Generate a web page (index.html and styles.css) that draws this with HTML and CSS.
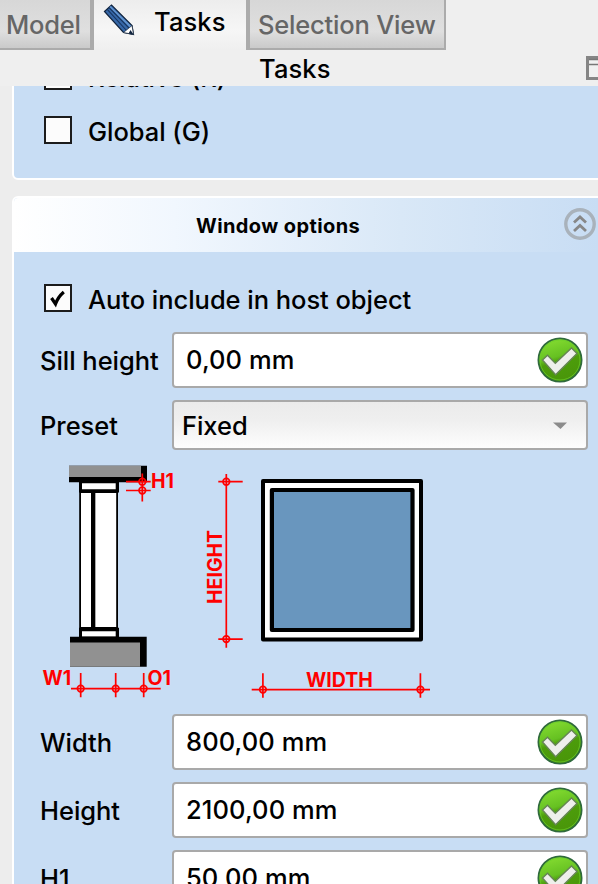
FILE: index.html
```html
<!DOCTYPE html>
<html lang="en">
<head>
<meta charset="utf-8">
<title>Tasks</title>
<link rel="stylesheet" href="styles.css">
</head>
<body>
<svg width="0" height="0" class="defs">
  <defs>
    <linearGradient id="green" x1="0" y1="0" x2=".3" y2="1">
      <stop offset="0" stop-color="#8be234"/><stop offset=".5" stop-color="#66c122"/><stop offset=".62" stop-color="#4c9d0b"/><stop offset="1" stop-color="#4a960a"/>
    </linearGradient>
    <symbol id="ok" viewBox="0 0 48 48">
      <circle cx="24" cy="24" r="21.6" fill="url(#green)" stroke="#2f6a3c" stroke-width="1.8"/>
      <circle cx="24" cy="24" r="20" fill="none" stroke="#6bd02a" stroke-width="1" opacity=".7"/>
      <path d="M6.5 24 11.5 19.3 19.3 27.3 35.5 12 41 17.5 19.6 38.8Z" fill="#eeefec" stroke="#658554" stroke-width="1.4"/>
    </symbol>
  </defs>
</svg>
<nav class="tabs">
  <div class="tab tab-model"><span>Model</span></div>
  <div class="tab tab-tasks">
    <svg class="pencil" width="32" height="32" viewBox="0 0 32 32">
      <path d="M1.5 7.5 8.5 1 29 21.500 30.500 30.500 20.500 28.500Z" fill="#3768a8" stroke="#10233d" stroke-width="1.2"/>
      <path d="M6.800 2.700 27.500 22.800" stroke="#5f92cf" stroke-width="2.200"/>
      <path d="M4 5.200 23.500 26.500M6 3.500 26 24" stroke="#16345f" stroke-width="1.100"/>
      <path d="M20.500 28.500 29 21.500 30.500 30.500Z" fill="#fff" stroke="#18283c" stroke-width=".7"/>
      <path d="M27.500 26 30.700 30.700 25.500 29.600Z" fill="#10233d"/>
    </svg>
    <span>Tasks</span>
  </div>
  <div class="tab tab-selection"><span>Selection View</span></div>
</nav>
<header class="dock-title">
  <span>Tasks</span>
  <svg class="float-icon" width="24" height="24" viewBox="0 0 24 24">
    <path d="M1.500 1.500H22.500V22.500H1.500Z" fill="#f0f0f0" stroke="#858585" stroke-width="3"/>
    <path d="M3 8.500H24M3 3.500H24" stroke="#777" stroke-width="1.600"/>
  </svg>
</header>
<main class="scroll">
  <section class="panel panel-top">
    <label class="check-row"><i class="box"></i><span>Relative (R)</span></label>
    <label class="check-row"><i class="box"></i><span>Global (G)</span></label>
  </section>
  <section class="panel">
    <div class="panel-head">
      <h2>Window options</h2>
      <svg class="collapse" width="32" height="32" viewBox="0 0 32 32" fill="none">
        <circle cx="16" cy="16" r="14.200" stroke="#a9b2bb" stroke-width="3.400"/>
        <path d="M10 14.500 16 9 22 14.500M10 23 16 17.500 22 23" stroke="#878787" stroke-width="2.800"/>
      </svg>
    </div>
    <div class="form">
      <label class="check-row wide"><i class="box"><svg width="24" height="24" viewBox="0 0 24 24"><path d="M5.500 12 9.500 18Q12 11 17.800 6" fill="none" stroke="#000" stroke-width="3.200"/></svg></i><span>Auto include in host object</span></label>
      <span class="label">Sill height</span>
      <div class="field"><span>0,00 mm</span><svg class="ok"><use href="#ok"/></svg></div>
      <span class="label">Preset</span>
      <div class="select"><span>Fixed</span><svg width="14" height="8" viewBox="0 0 14 8"><path d="M0 .5H14L7.500 7Z" fill="#8b8b8b"/></svg></div>
      <svg class="diagram wide" width="548" height="240" viewBox="40 462 548 240">
        <g class="section">
          <path d="M69 465.700H147V482.300H69Z" fill="#000"/>
          <path d="M69 465.700H141V477H69Z" fill="#919191"/>
          <path d="M79 482H119V492.500H79Z" fill="#000"/>
          <path d="M82 483.300H115.700V489.200H82Z" fill="#fff"/>
          <path d="M79.200 492H118V628H79.200Z" fill="#000"/>
          <path d="M81 493H116.200V627H81Z" fill="#fff"/>
          <path d="M91 493H95V627H91Z" fill="#000"/>
          <path d="M95 493H96V627H95Z" fill="#aaa"/>
          <path d="M79 627.700H119V637H79Z" fill="#000"/>
          <path d="M82 631.300H115.700V636.500H82Z" fill="#fff"/>
          <path d="M70 636.700H146.700V666.700H70Z" fill="#000"/>
          <path d="M70 642.500H140V666.700H70Z" fill="#919191"/>
        </g>
        <rect x="263" y="481" width="158" height="158.600" fill="#fff" stroke="#000" stroke-width="4" stroke-linejoin="round"/>
        <rect x="271.900" y="490" width="140.600" height="140" fill="#6996be" stroke="#000" stroke-width="4.200" stroke-linejoin="round"/>
        <g stroke="#f00" stroke-width="1.700" fill="none">
          <path d="M142.300 473.500V501.500M126 481.700H150.700M126 490.500H150.700"/>
          <path d="M71 688.600H160.700M80.700 673V697.300M115.700 673V697.300M143.700 673V697.300"/>
          <path d="M226.300 474V647.700M218.300 481.700H242.700M218.300 639.100H242.700"/>
          <path d="M251.700 689.600H430M262.900 673.300V697.700M420.400 673.300V697.700"/>
          <circle cx="142.300" cy="481.700" r="3.300"/><circle cx="142.300" cy="490.500" r="3.300"/>
          <circle cx="80.700" cy="688.600" r="3.300"/><circle cx="115.700" cy="688.600" r="3.300"/><circle cx="143.700" cy="688.600" r="3.300"/>
          <circle cx="226.300" cy="481.700" r="3.300"/><circle cx="226.300" cy="639.100" r="3.300"/>
          <circle cx="262.900" cy="689.600" r="3.300"/><circle cx="420.400" cy="689.600" r="3.300"/>
        </g>
        <g class="dims">
          <text x="151" y="487.500">H1</text>
          <text x="42.500" y="685">W1</text>
          <text x="147.500" y="685">O1</text>
          <text x="306" y="686.500">WIDTH</text>
          <text transform="translate(221.500 604) rotate(-90)">HEIGHT</text>
        </g>
      </svg>
      <span class="label">Width</span>
      <div class="field"><span>800,00 mm</span><svg class="ok"><use href="#ok"/></svg></div>
      <span class="label">Height</span>
      <div class="field"><span>2100,00 mm</span><svg class="ok"><use href="#ok"/></svg></div>
      <span class="label">H1</span>
      <div class="field"><span>50,00 mm</span><svg class="ok"><use href="#ok"/></svg></div>
    </div>
  </section>
</main>
</body>
</html>
```
FILE: styles.css
```css
* { box-sizing: border-box; }
html, body { margin: 0; height: 884px; overflow: hidden; }
body {
  width: 598px;
  display: flex;
  flex-direction: column;
  background: #efefef;
  color: #000;
  font: 500 25.5px/32px Inter, "Liberation Sans", sans-serif;
  letter-spacing: -0.04px;
  white-space: nowrap;
}
.defs { position: absolute; }
svg { display: block; flex: none; }

.tabs { display: flex; height: 50px; flex: none; }
.tab { display: flex; height: 50px; padding-top: 9px; }
.tab-model, .tab-selection {
  color: #666;
  background: linear-gradient(#d7d7d7, #dfdfdf 65%, #cacaca);
  border-bottom: 2px solid #ababab;
}
.tab-model { width: 94px; padding-left: 6px; border-right: 4px solid #ababab; letter-spacing: -0.2px; }
.tab-tasks { width: 152px; padding: 6px 0 0 9px; gap: 19px; background: linear-gradient(#ededed, #f6f6f6 60%, #efefef); letter-spacing: 0.1px; }
.tab-selection { width: 200px; padding-left: 8px; border-left: 4px solid #ababab; border-right: 2px solid #ababab; letter-spacing: -0.2px; }
.pencil { margin-top: -2px; }

.dock-title { display: flex; justify-content: space-between; height: 36px; flex: none; padding: 3px 0 0 259px; overflow: hidden; letter-spacing: 0.1px; }
.float-icon { margin: 3px -12px 0 0; }

.scroll { display: flex; flex-direction: column; gap: 16px; flex: 1; min-height: 0; overflow: hidden; padding-left: 12px; background: #ededed; }
.panel { width: 600px; flex: none; border: 2px solid #fff; border-radius: 6px; background: #c8ddf4; overflow: hidden; }
.panel-top { display: flex; flex-direction: column; gap: 14px; height: 140px; margin-top: -46px; padding: 14px 0 0 30px; }
.panel-head { display: flex; align-items: center; height: 54px; background: linear-gradient(90deg, #fff, #f1f7fe 27%, #d9e8f7 65%, #c8ddf4 98%); }
.panel-head h2 { margin: 2px 0 0 182px; width: 168px; font-size: 20px; font-weight: 700; letter-spacing: 0.4px; }
.collapse { margin: -2px 0 0 200px; }

.check-row { display: flex; align-items: center; height: 40px; gap: 16px; }
.check-row span { padding-top: 3px; }
.box { flex: none; width: 28px; height: 28px; border: 2px solid #1c1c1c; background: #fcfcfc; }
.form { display: grid; grid-template-columns: 132px 416px; row-gap: 12px; padding: 26px 0 0 26px; }
.form .check-row { padding-left: 4px; margin-bottom: 2px; }
.wide { grid-column: 1 / -1; }
.label { align-self: center; padding-top: 1px; }
.field, .select { display: flex; align-items: center; justify-content: space-between; border: 2px solid #a9a9a9; border-radius: 4px; }
.field { height: 56px; padding: 0 2px 0 12px; background: #fff; letter-spacing: 0.1px; }
.select { height: 50px; padding: 2px 19px 0 8px; background: linear-gradient(#ebebeb, #efefef 40%, #fdfdfd); }
.ok { width: 48px; height: 48px; }
.dims { fill: #f00; font-size: 19.5px; font-weight: 650; letter-spacing: 0; }
```
